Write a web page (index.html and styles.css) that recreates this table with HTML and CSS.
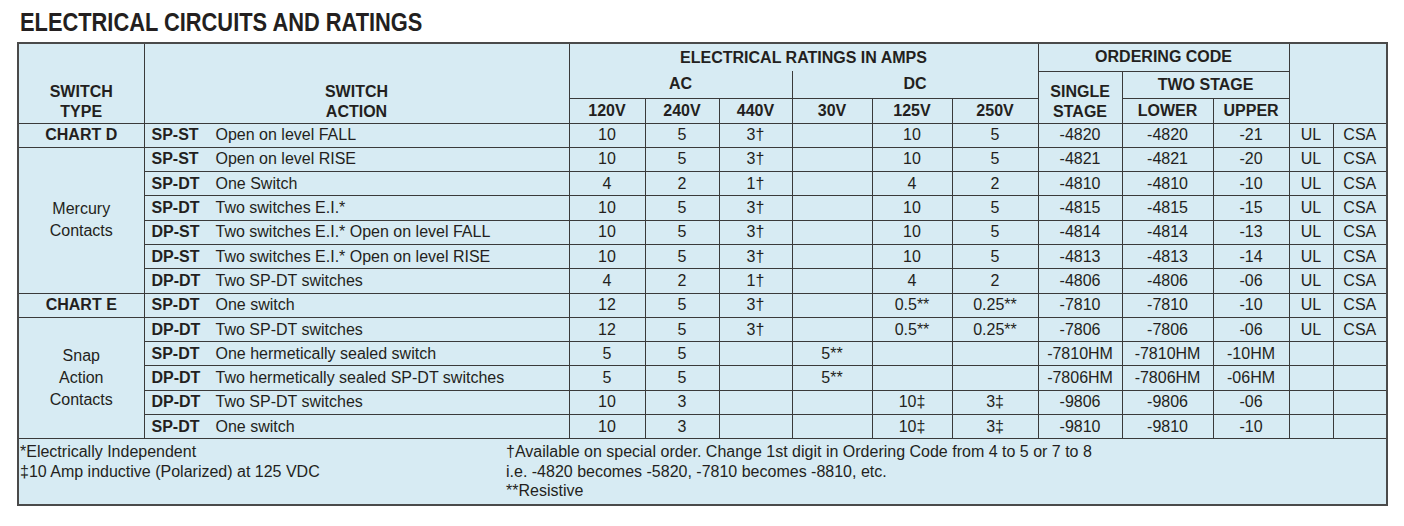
FILE: index.html
```html
<!DOCTYPE html>
<html lang="en">
<head>
<meta charset="utf-8">
<title>Electrical Circuits and Ratings</title>
<link rel="stylesheet" href="styles.css">
</head>
<body>
<h1 class="title"><span class="title-text">ELECTRICAL CIRCUITS AND RATINGS</span></h1>
<table class="ratings">
  <colgroup>
    <col class="c-type"><col class="c-action">
    <col class="c-120"><col class="c-240"><col class="c-440">
    <col class="c-30"><col class="c-125"><col class="c-250">
    <col class="c-single"><col class="c-lower"><col class="c-upper">
    <col class="c-ul"><col class="c-csa">
  </colgroup>
  <thead>
    <tr class="h1">
      <th rowspan="3" class="bottom">SWITCH<br>TYPE</th>
      <th rowspan="3" class="bottom">SWITCH<br>ACTION</th>
      <th colspan="6" class="no-bottom">ELECTRICAL RATINGS IN AMPS</th>
      <th colspan="3">ORDERING CODE</th>
      <th colspan="2" rowspan="3"></th>
    </tr>
    <tr class="h2">
      <th colspan="3" class="no-top">AC</th>
      <th colspan="3" class="no-top">DC</th>
      <th rowspan="2" class="bottom">SINGLE<br>STAGE</th>
      <th colspan="2">TWO STAGE</th>
    </tr>
    <tr class="h3">
      <th>120V</th><th>240V</th><th>440V</th>
      <th>30V</th><th>125V</th><th>250V</th>
      <th>LOWER</th><th>UPPER</th>
    </tr>
  </thead>
  <tbody>
    <tr>
      <td class="type chart">CHART D</td>
      <td class="action"><b>SP-ST</b>Open on level FALL</td>
      <td>10</td><td>5</td><td>3†</td><td></td><td>10</td><td>5</td>
      <td>-4820</td><td>-4820</td><td>-21</td><td>UL</td><td>CSA</td>
    </tr>
    <tr>
      <td class="type" rowspan="6">Mercury<br>Contacts</td>
      <td class="action"><b>SP-ST</b>Open on level RISE</td>
      <td>10</td><td>5</td><td>3†</td><td></td><td>10</td><td>5</td>
      <td>-4821</td><td>-4821</td><td>-20</td><td>UL</td><td>CSA</td>
    </tr>
    <tr>
      <td class="action"><b>SP-DT</b>One Switch</td>
      <td>4</td><td>2</td><td>1†</td><td></td><td>4</td><td>2</td>
      <td>-4810</td><td>-4810</td><td>-10</td><td>UL</td><td>CSA</td>
    </tr>
    <tr>
      <td class="action"><b>SP-DT</b>Two switches E.I.*</td>
      <td>10</td><td>5</td><td>3†</td><td></td><td>10</td><td>5</td>
      <td>-4815</td><td>-4815</td><td>-15</td><td>UL</td><td>CSA</td>
    </tr>
    <tr>
      <td class="action"><b>DP-ST</b>Two switches E.I.* Open on level FALL</td>
      <td>10</td><td>5</td><td>3†</td><td></td><td>10</td><td>5</td>
      <td>-4814</td><td>-4814</td><td>-13</td><td>UL</td><td>CSA</td>
    </tr>
    <tr>
      <td class="action"><b>DP-ST</b>Two switches E.I.* Open on level RISE</td>
      <td>10</td><td>5</td><td>3†</td><td></td><td>10</td><td>5</td>
      <td>-4813</td><td>-4813</td><td>-14</td><td>UL</td><td>CSA</td>
    </tr>
    <tr>
      <td class="action"><b>DP-DT</b>Two SP-DT switches</td>
      <td>4</td><td>2</td><td>1†</td><td></td><td>4</td><td>2</td>
      <td>-4806</td><td>-4806</td><td>-06</td><td>UL</td><td>CSA</td>
    </tr>
    <tr>
      <td class="type chart">CHART E</td>
      <td class="action"><b>SP-DT</b>One switch</td>
      <td>12</td><td>5</td><td>3†</td><td></td><td>0.5**</td><td>0.25**</td>
      <td>-7810</td><td>-7810</td><td>-10</td><td>UL</td><td>CSA</td>
    </tr>
    <tr>
      <td class="type" rowspan="5">Snap<br>Action<br>Contacts</td>
      <td class="action"><b>DP-DT</b>Two SP-DT switches</td>
      <td>12</td><td>5</td><td>3†</td><td></td><td>0.5**</td><td>0.25**</td>
      <td>-7806</td><td>-7806</td><td>-06</td><td>UL</td><td>CSA</td>
    </tr>
    <tr>
      <td class="action"><b>SP-DT</b>One hermetically sealed switch</td>
      <td>5</td><td>5</td><td></td><td>5**</td><td></td><td></td>
      <td>-7810HM</td><td>-7810HM</td><td>-10HM</td><td></td><td></td>
    </tr>
    <tr>
      <td class="action"><b>DP-DT</b>Two hermetically sealed SP-DT switches</td>
      <td>5</td><td>5</td><td></td><td>5**</td><td></td><td></td>
      <td>-7806HM</td><td>-7806HM</td><td>-06HM</td><td></td><td></td>
    </tr>
    <tr>
      <td class="action"><b>DP-DT</b>Two SP-DT switches</td>
      <td>10</td><td>3</td><td></td><td></td><td>10‡</td><td>3‡</td>
      <td>-9806</td><td>-9806</td><td>-06</td><td></td><td></td>
    </tr>
    <tr>
      <td class="action"><b>SP-DT</b>One switch</td>
      <td>10</td><td>3</td><td></td><td></td><td>10‡</td><td>3‡</td>
      <td>-9810</td><td>-9810</td><td>-10</td><td></td><td></td>
    </tr>
  </tbody>
  <tfoot>
    <tr>
      <td colspan="13" class="notes">
        <div class="notes-grid">
          <div>*Electrically Independent<br>‡10 Amp inductive (Polarized) at 125 VDC</div>
          <div>†Available on special order. Change 1st digit in Ordering Code from 4 to 5 or 7 to 8<br>i.e. -4820 becomes -5820, -7810 becomes -8810, etc.<br>**Resistive</div>
        </div>
      </td>
    </tr>
  </tfoot>
</table>
</body>
</html>
```

FILE: styles.css
```css
html, body {
  margin: 0;
  padding: 0;
  background: #ffffff;
}
body {
  font-family: "Liberation Sans", Arial, sans-serif;
  color: #231f20;
}
.title {
  margin: 0;
  padding: 9px 0 0 20px;
  height: 33px;
  box-sizing: border-box;
  font-size: 26px;
  line-height: 26px;
  font-weight: bold;
  white-space: nowrap;
}
.title-text {
  display: inline-block;
  transform: scaleX(0.84);
  transform-origin: left center;
}
.ratings {
  margin: 9px 0 0 17px;
  border-collapse: collapse;
  table-layout: fixed;
  width: 1370px;
  background: #d7ebf3;
  border: 2px solid #4a4a4a;
  font-size: 16px;
}
.c-type { width: 126px; }
.c-action { width: 425px; }
.c-120 { width: 76px; }
.c-240 { width: 74px; }
.c-440 { width: 73px; }
.c-30 { width: 80px; }
.c-125 { width: 80px; }
.c-250 { width: 86px; }
.c-single { width: 84px; }
.c-lower { width: 91px; }
.c-upper { width: 76px; }
.c-ul { width: 44px; }
.c-csa { width: 54px; }

.ratings th,
.ratings td {
  border: 1px solid #3a3a3a;
  padding: 0;
  text-align: center;
  vertical-align: middle;
  line-height: 20px;
  white-space: nowrap;
  overflow: hidden;
}
.ratings th {
  font-weight: bold;
}
.ratings th.bottom {
  vertical-align: bottom;
  padding-bottom: 1px;
}
.ratings th.no-bottom { border-bottom: none; }
.ratings th.no-top { border-top: none; }

.h1 { height: 28px; }
.h2 { height: 27px; }
.h3 { height: 25px; }
.ratings tbody tr { height: 24.3px; }

.ratings td.action {
  text-align: left;
  padding-left: 7px;
}
.action b {
  display: inline-block;
  width: 64px;
}
.ratings td.type {
  line-height: 22px;
}
.ratings td.chart {
  font-weight: bold;
}
.ratings td.notes {
  text-align: left;
  vertical-align: top;
  height: 62px;
  padding: 3px 0 0 1px;
  line-height: 19.5px;
}
.notes-grid {
  display: grid;
  grid-template-columns: 486px 1fr;
}
```
